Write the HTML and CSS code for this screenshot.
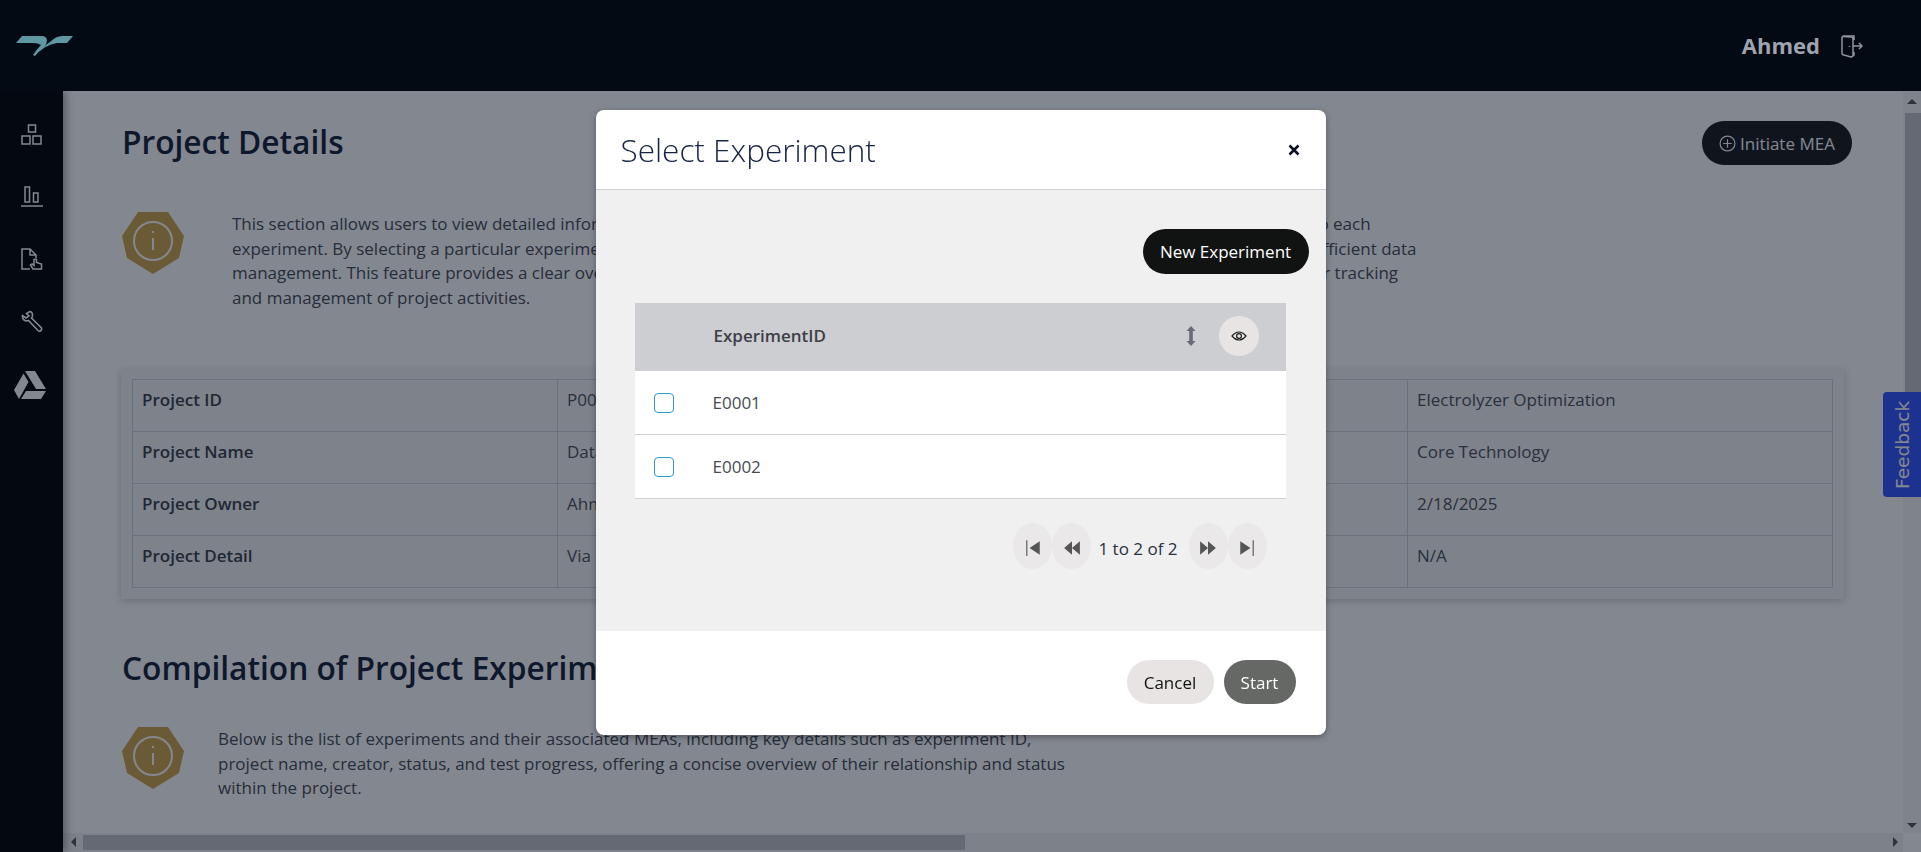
FILE: index.html
```html
<!DOCTYPE html>
<html lang="en">
  <head>
    <meta charset="UTF-8" />
    <title>Project Details</title>
    <link rel="stylesheet" href="styles.css">
  </head>
  <body>
    <header class="topbar">
      <svg class="logo" viewBox="0 0 57 21" fill="#5f97a3">
        <path d="M6 1H26Q30 1 31 5Q31 9 28 13Q23 16 19 21L17 20Q21 14 25 10Q22 8 17 8H0Z" />
        <path d="M34 7Q40 1 46 1H57L51 8H41Q34 9 28 13Q30 9 34 7Z" />
      </svg>
      <div class="user">
        <span class="user-name">Ahmed</span>
        <svg class="logout" viewBox="0 0 22 24" fill="none" stroke="#8f949e" stroke-width="1.5">
          <path d="M13 6V2H3Q1 2 1 4V19Q1 21 3 21L10 23Q12 23 12 21V3M13 18V21H12" />
          <path d="M2 2.5L10 3Q12 3 12 5M8.5 12V13M12 12H21M18 9L21 12L18 15" />
        </svg>
      </div>
    </header>

    <div class="layout">
      <nav class="sidebar">
        <svg class="nav-icon" viewBox="0 0 22 22" fill="none" stroke="#fff" stroke-width="1.5">
          <rect x="7.5" y="1" width="7" height="7" />
          <rect x="1" y="12" width="8" height="8" />
          <rect x="12" y="12" width="8" height="8" />
        </svg>
        <svg class="nav-icon" viewBox="0 0 22 22" fill="none" stroke="#fff" stroke-width="1.5">
          <rect x="4" y="1" width="4.5" height="15" />
          <rect x="12.5" y="7" width="4.5" height="9" />
          <path d="M0 20H22" />
        </svg>
        <svg class="nav-icon" viewBox="0 0 22 22" fill="none" stroke="#fff" stroke-width="1.5">
          <path d="M9 21H1V1H9L15 7V10M9 1V7H15" />
          <path d="M12 21L9.5 17L11 16L13 17.5V11.5Q14.5 10.5 15.5 11.5V14.5L20.5 16V21Z" />
        </svg>
        <svg class="nav-icon" viewBox="0 0 22 22" fill="none" stroke="#fff" stroke-width="1.6">
          <path d="M5.5 3.5L9 1.5Q11.5 2 11.5 5Q11.5 7 10.5 8L20.5 18Q21 20 19.5 21Q18 21.5 17 20.5L7.5 10.5Q5 11.5 3 10Q1 8 1.5 5.5L5 8L8 6Z" />
        </svg>
        <svg class="nav-drive" viewBox="0 0 32 28" fill="#fff">
          <path d="M11 0H21L32 18H22Z" />
          <path d="M9.5 2.5L14.5 11L5 28L0 19Z" />
          <path d="M12 20H32L27 28H7Z" />
        </svg>
      </nav>

      <main class="main">
        <div class="content">
          <div class="title-row">
            <h1 class="section-title title-main">Project Details</h1>
            <button class="initiate-btn">
              <svg class="plus-icon" viewBox="0 0 16 16" fill="none" stroke="#fff" stroke-width="1.1">
                <circle cx="8" cy="8" r="7" />
                <path d="M8 4V12M4 8H12" />
              </svg>
              Initiate MEA
            </button>
          </div>

          <div class="info-block info-first">
            <svg class="badge" viewBox="0 0 62 62">
              <path d="M16 0H46L62 24L57 46L31 62L5 46L0 24Z" fill="#cfa54d" />
              <circle cx="31" cy="29" r="19" fill="none" stroke="#fff" stroke-width="2" />
              <path d="M31 26V38M31 19V21" stroke="#fff" stroke-width="2" />
            </svg>
            <p class="info-text">
              This section allows users to view detailed information about a specific project, including all the current experiments and the MEAs linked to each<br />
              experiment. By selecting a particular experiment, users can review every MEA associated with it and open its entire test record, ensuring efficient data<br />
              management. This feature provides a clear overview of the status of each experiment and all the test results, that makes it highly useful for tracking<br />
              and management of project activities.
            </p>
          </div>

          <section class="details-card">
            <table class="details-table">
              <tr><th>Project ID</th><td>P0001</td><th>Project Type</th><td>Electrolyzer Optimization</td></tr>
              <tr><th>Project Name</th><td>Data Analysis</td><th>Category</th><td>Core Technology</td></tr>
              <tr><th>Project Owner</th><td>Ahmed</td><th>Created On</th><td>2/18/2025</td></tr>
              <tr><th>Project Detail</th><td>Via MEA testing</td><th>Remarks</th><td>N/A</td></tr>
            </table>
          </section>

          <h2 class="section-title compile-title">Compilation of Project Experiments</h2>

          <div class="info-block info-second">
            <svg class="badge" viewBox="0 0 62 62">
              <path d="M16 0H46L62 24L57 46L31 62L5 46L0 24Z" fill="#cfa54d" />
              <circle cx="31" cy="29" r="19" fill="none" stroke="#fff" stroke-width="2" />
              <path d="M31 26V38M31 19V21" stroke="#fff" stroke-width="2" />
            </svg>
            <p class="info-text narrow">
              Below is the list of experiments and their associated MEAs, including key details such as experiment ID,
              project name, creator, status, and test progress, offering a concise overview of their relationship and status
              within the project.
            </p>
          </div>
        </div>

        <div class="scroll-y">
          <span class="arrow arrow-up"></span>
          <span class="thumb-y"></span>
          <span class="arrow arrow-down"></span>
        </div>
        <div class="scroll-x">
          <span class="arrow arrow-left"></span>
          <span class="thumb-x"></span>
          <span class="arrow arrow-right"></span>
        </div>
        <button class="feedback">Feedback</button>
      </main>
    </div>

    <div class="backdrop">
      <div class="modal">
        <div class="modal-header">
          <h3 class="modal-title">Select Experiment</h3>
          <svg class="close-icon" viewBox="0 0 12 12" stroke="#0a1020" stroke-width="2.6">
            <path d="M1.5 1.5L10.5 10.5M10.5 1.5L1.5 10.5" />
          </svg>
        </div>

        <div class="modal-body">
          <div class="new-row">
            <button class="new-btn">New Experiment</button>
          </div>

          <div class="grid">
            <div class="grid-head">
              <span class="grid-label">ExperimentID</span>
              <svg class="sort-icon" viewBox="0 0 10 20" fill="#666b75">
                <path d="M5 0L9.5 5H6.8V15H9.5L5 20L0.5 15H3.2V5H0.5Z" />
              </svg>
              <span class="eye-btn">
                <svg class="eye-icon" viewBox="0 0 16 12" fill="none" stroke="#1a1a1a" stroke-width="1.2">
                  <path d="M1 6Q8 -2 15 6Q8 14 1 6Z" />
                  <circle cx="8" cy="6" r="2.4" />
                </svg>
              </span>
            </div>
            <div class="grid-row">
              <span class="check"></span>
              <span class="grid-cell">E0001</span>
            </div>
            <div class="grid-row">
              <span class="check"></span>
              <span class="grid-cell">E0002</span>
            </div>
          </div>

          <div class="pager">
            <span class="page-btn">
              <svg class="page-icon" viewBox="0 0 14 16" fill="#555"><path d="M1 1H2V15H1ZM13 2V14L4 8Z" /></svg>
            </span>
            <span class="page-btn">
              <svg class="page-icon" viewBox="0 0 14 16" fill="#555"><path d="M7 2V14L0 8ZM14 2V14L7 8Z" /></svg>
            </span>
            <span class="page-text">1 to 2 of 2</span>
            <span class="page-btn">
              <svg class="page-icon" viewBox="0 0 14 16" fill="#555"><path d="M0 2V14L7 8ZM7 2V14L14 8Z" /></svg>
            </span>
            <span class="page-btn">
              <svg class="page-icon" viewBox="0 0 14 16" fill="#555"><path d="M1 2V14L10 8ZM12 1H13V15H12Z" /></svg>
            </span>
          </div>
        </div>

        <div class="modal-footer">
          <button class="cancel-btn">Cancel</button>
          <button class="start-btn">Start</button>
        </div>
      </div>
    </div>
  </body>
</html>
```

FILE: styles.css
```css
* {
  box-sizing: border-box;
}

body {
  margin: 0;
  height: 100vh;
  overflow: hidden;
  display: flex;
  flex-direction: column;
  font-family: 'Open Sans', 'Liberation Sans', sans-serif;
  background-color: #000;
  color: #464b55;
}

button {
  font-family: inherit;
  border: none;
  cursor: pointer;
}

.topbar {
  height: 91px;
  flex-shrink: 0;
  position: relative;
  z-index: 11;
  display: flex;
  align-items: center;
  justify-content: space-between;
  padding: 0 58px 0 16px;
  background-color: #040a14;
}

.logo {
  width: 57px;
  height: 21px;
}

.user {
  display: flex;
  align-items: center;
  gap: 21px;
}

.user-name {
  font-size: 22px;
  font-weight: 700;
  color: #9fa4ae;
  padding-bottom: 2px;
}

.logout {
  width: 22px;
  height: 24px;
}

.layout {
  flex: 1;
  display: flex;
  min-height: 0;
}

.sidebar {
  width: 63px;
  flex-shrink: 0;
  display: flex;
  flex-direction: column;
  align-items: center;
  padding-top: 33px;
  background-color: #000;
  box-shadow: 3px 0 8px rgba(0, 0, 0, 0.35);
  z-index: 1;
}

.nav-icon {
  width: 22px;
  height: 22px;
  margin-bottom: 40px;
}

.nav-drive {
  width: 32px;
  height: 28px;
  margin-top: -1px;
  margin-right: 4px;
}

.main {
  flex: 1;
  position: relative;
  overflow: hidden;
  background-color: #fff;
}

.content {
  padding: 30px 77px 0 58px;
}

.title-row {
  height: 44px;
  display: flex;
  align-items: center;
  justify-content: space-between;
  margin-right: -8px;
}

.section-title {
  margin: 0;
  padding-left: 1px;
  font-size: 31.7px;
  font-weight: 600;
  color: #152038;
}

.title-main {
  padding-bottom: 3px;
}

.initiate-btn {
  width: 150px;
  height: 44px;
  display: flex;
  align-items: center;
  justify-content: center;
  gap: 4px;
  border-radius: 22px;
  background-color: #17191b;
  color: #fff;
  font-size: 17px;
}

.plus-icon {
  width: 17px;
  height: 17px;
}

.info-block {
  display: flex;
  align-items: flex-start;
}

.info-first {
  margin-top: 47px;
  gap: 48px;
}

.info-second {
  margin-top: 38px;
  gap: 34px;
}

.badge {
  width: 62px;
  height: 62px;
  flex-shrink: 0;
  margin-left: 1px;
}

.info-text {
  margin: 0;
  font-size: 17px;
  line-height: 24.5px;
  color: #464b55;
  white-space: nowrap;
}

.narrow {
  width: 855px;
  white-space: normal;
}

.details-card {
  margin-top: 59px;
  padding: 10px 11px 11px;
  background-color: #f5f5f5;
  box-shadow: 0 2px 8px rgba(0, 0, 0, 0.2);
}

.details-table {
  width: 100%;
  table-layout: fixed;
  border-collapse: collapse;
  font-size: 17px;
}

.details-table th,
.details-table td {
  height: 52px;
  padding: 8px 9px 18px;
  border: 1px solid #cfd1d6;
  text-align: left;
  vertical-align: top;
}

.details-table th {
  font-weight: 600;
  color: #3a3f4a;
}

.details-table td {
  font-weight: 400;
  color: #4c515b;
}

.compile-title {
  margin-top: 47px;
  white-space: nowrap;
}

.scroll-y {
  position: absolute;
  top: 0;
  right: 0;
  bottom: 19px;
  width: 18px;
  background-color: #f6f6f6;
}

.thumb-y {
  position: absolute;
  top: 22px;
  left: 2px;
  right: 0;
  height: 330px;
  background-color: #c1c3c8;
}

.scroll-x {
  position: absolute;
  left: 0;
  right: 18px;
  bottom: 0;
  height: 19px;
  background-color: #f2f2f2;
}

.thumb-x {
  position: absolute;
  left: 20px;
  top: 2px;
  bottom: 2px;
  width: 882px;
  background-color: #c1c3c8;
}

.arrow {
  position: absolute;
  width: 0;
  height: 0;
  border: 5px solid transparent;
}

.arrow-up {
  top: 3px;
  left: 4px;
  border-bottom-color: #555;
}

.arrow-down {
  bottom: 0;
  left: 4px;
  border-top-color: #555;
}

.arrow-left {
  top: 4px;
  left: 3px;
  border-right-color: #555;
}

.arrow-right {
  top: 4px;
  right: 0;
  border-left-color: #555;
}

.feedback {
  position: absolute;
  top: 301px;
  right: 0;
  width: 38px;
  height: 105px;
  padding: 0;
  border-radius: 0 4px 4px 0;
  background-color: #3355ff;
  color: #fff;
  font-family: 'DejaVu Sans', sans-serif;
  font-size: 18.5px;
  writing-mode: vertical-rl;
  transform: rotate(180deg);
}

.backdrop {
  position: fixed;
  inset: 0;
  z-index: 10;
  padding-top: 110px;
  background-color: rgba(7, 15, 31, 0.5);
}

.modal {
  width: 730px;
  height: 625px;
  margin: 0 auto;
  display: flex;
  flex-direction: column;
  border-radius: 8px;
  overflow: hidden;
  background-color: #fff;
  box-shadow: 0 2px 6px rgba(0, 0, 0, 0.35);
}

.modal-header {
  height: 80px;
  flex-shrink: 0;
  display: flex;
  align-items: center;
  justify-content: space-between;
  padding: 0 26px 0 25px;
  border-bottom: 1px solid #cfd0d3;
}

.modal-title {
  margin: 0;
  font-size: 31.5px;
  font-weight: 300;
  color: #172345;
}

.close-icon {
  width: 12px;
  height: 12px;
  margin-top: 1px;
}

.modal-body {
  flex: 1;
  padding: 39px 17px 0 39px;
  background-color: #f0f0f0;
}

.new-row {
  display: flex;
  justify-content: flex-end;
}

.new-btn {
  width: 166px;
  height: 45px;
  border-radius: 23px;
  background-color: #111312;
  color: #fff;
  font-size: 17px;
  font-weight: 500;
}

.grid {
  width: 651px;
  margin-top: 29px;
}

.grid-head {
  height: 68px;
  display: flex;
  align-items: center;
  padding: 0 0 3px 79px;
  background-color: #cdced2;
}

.grid-label {
  flex: 1;
  font-size: 17px;
  font-weight: 600;
  color: #3c3f46;
}

.sort-icon {
  width: 10px;
  height: 20px;
  margin-right: 23px;
}

.eye-btn {
  width: 40px;
  height: 40px;
  margin-right: 27px;
  display: flex;
  align-items: center;
  justify-content: center;
  border-radius: 50%;
  background-color: #e8e4e4;
}

.eye-icon {
  width: 16px;
  height: 12px;
}

.grid-row {
  height: 64px;
  display: flex;
  align-items: center;
  padding-left: 19px;
  background-color: #fff;
  border-bottom: 1px solid #cfd0d3;
}

.check {
  width: 20px;
  height: 20px;
  border: 1px solid #2d9fc5;
  border-radius: 4px;
  background-color: #fff;
}

.grid-cell {
  margin-left: 39px;
  font-size: 17px;
  color: #464b52;
}

.pager {
  width: 651px;
  margin-top: 24px;
  padding-right: 19px;
  display: flex;
  align-items: center;
  justify-content: flex-end;
}

.page-btn {
  width: 39px;
  height: 46px;
  padding-top: 4px;
  display: flex;
  align-items: center;
  justify-content: center;
  border-radius: 50%;
  background-color: #eae8e8;
}

.page-icon {
  width: 16px;
  height: 18px;
}

.page-text {
  margin: 5px 11px 0 7px;
  font-size: 17px;
  color: #2a3040;
}

.modal-footer {
  height: 104px;
  flex-shrink: 0;
  display: flex;
  justify-content: flex-end;
  gap: 10px;
  padding: 29px 30px 0 0;
}

.cancel-btn,
.start-btn {
  height: 44px;
  border-radius: 22px;
  font-size: 17px;
  font-weight: 500;
}

.cancel-btn {
  width: 87px;
  background-color: #e8e4e4;
  color: #111;
}

.start-btn {
  width: 72px;
  background-color: #666865;
  color: #fff;
}
```
